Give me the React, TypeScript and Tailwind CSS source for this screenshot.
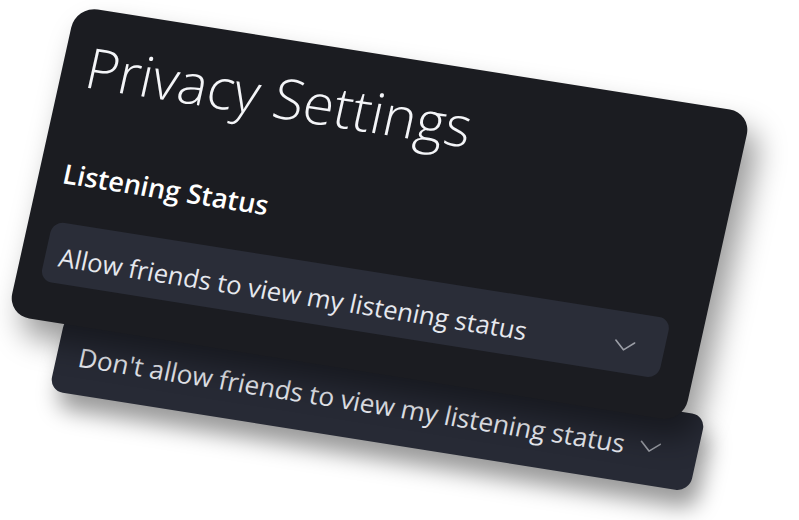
import React from 'react';

const Chevron = ({ className }: { className?: string }) => (
  <svg viewBox="0 0 22 12" className={className} fill="none">
    <path d="M1.5 1.5 L11 10 L20.5 1.5" stroke="#9b9ea6" strokeWidth="1.6" strokeLinecap="round" strokeLinejoin="round" />
  </svg>
);

const App = () => {
  return (
    <div className="w-[799px] h-[520px] overflow-hidden bg-white font-['Open_Sans','Noto_Sans',sans-serif]">
      <div className="ml-[76px] mt-[6px] w-[684px] origin-top-left [transform:rotate(9deg)_skewX(-3.5deg)] relative">
        {/* options menu, sits behind the card */}
        <div className="absolute left-[57px] top-[306px] w-[648px] h-[78px] rounded-[14px] bg-[#272a35] shadow-[10px_16px_22px_rgba(0,0,0,0.4)] flex pt-[25px] pl-[22px] pr-[30px]">
          <div className="flex items-center h-[30px] gap-[14px]">
            <span className="text-[26px] leading-[30px] text-[#e6e8ee] whitespace-nowrap">
              Don't allow friends to view my listening status
            </span>
            <Chevron className="w-[22px] h-[12px] shrink-0" />
          </div>
        </div>

        <section className="relative z-10 h-[316px] rounded-[22px] bg-[#1b1c21] pl-6 pr-[34px] pt-[27px] shadow-[14px_18px_30px_rgba(0,0,0,0.4)]">
          <h1 className="text-[56px] leading-[60px] font-light text-[#f4f5f8] whitespace-nowrap">
            Privacy Settings
          </h1>
          <p className="mt-[66px] text-[27px] leading-[27px] font-semibold text-white">
            Listening Status
          </p>
          <div className="mt-[36px] h-[61px] rounded-[12px] bg-[#2a2d38] pl-[14px] pr-[29px] pt-[19px] flex justify-between">
            <span className="text-[25.5px] leading-[30px] text-[#e6e8ee] whitespace-nowrap">
              Allow friends to view my listening status
            </span>
            <div className="h-[30px] flex items-center">
              <Chevron className="w-[22px] h-[12px]" />
            </div>
          </div>
        </section>
      </div>
    </div>
  );
};

export default App;
